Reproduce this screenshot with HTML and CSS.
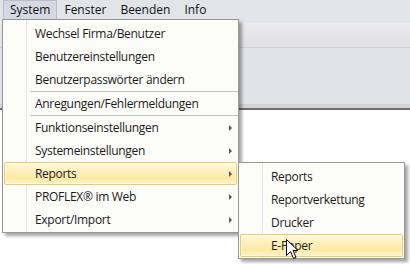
FILE: index.html
```html
<!DOCTYPE html>
<html lang="de">
<head>
    <meta charset="UTF-8">
    <meta name="viewport" content="width=device-width, initial-scale=1.0">
    <title>PROFLEX - System</title>
    <link rel="stylesheet" href="styles.css">
</head>
<body>
    <div class="window">
        <nav class="menubar">
            <span class="menubar-item open">System</span>
            <span class="menubar-item">Fenster</span>
            <span class="menubar-item">Beenden</span>
            <span class="menubar-item">Info</span>
        </nav>
        <div class="strip"></div>
        <div class="toolbar"></div>
        <div class="workspace"></div>
        <div class="divider"></div>
        <div class="content"></div>

        <ul class="menu main-menu">
            <li class="item">Wechsel Firma/Benutzer</li>
            <li class="item">Benutzereinstellungen</li>
            <li class="item">Benutzerpasswörter ändern</li>
            <li class="sep"></li>
            <li class="item">Anregungen/Fehlermeldungen</li>
            <li class="sep"></li>
            <li class="item has-sub">Funktionseinstellungen</li>
            <li class="item has-sub">Systemeinstellungen</li>
            <li class="item has-sub active">Reports</li>
            <li class="item has-sub">PROFLEX® im Web</li>
            <li class="item has-sub">Export/Import</li>
        </ul>

        <ul class="menu sub-menu">
            <li class="item">Reports</li>
            <li class="item">Reportverkettung</li>
            <li class="item">Drucker</li>
            <li class="item active">E-Paper</li>
        </ul>

        <svg class="cursor" width="13" height="21" viewBox="0 0 13 21">
            <path d="M0.5 0.5 L0.5 16.5 L4.5 12.5 L7.5 19.5 L10 18.5 L7 11.5 L12 11.5 Z" fill="#fff" stroke="#000" stroke-width="1" stroke-linejoin="miter"/>
        </svg>
    </div>
</body>
</html>
```

FILE: styles.css
```css
body {
    margin: 0;
    font-family: "Open Sans", "Noto Sans", sans-serif;
    font-size: 12px;
    color: #1b1b1b;
    background-color: #fff;
}

.window {
    position: relative;
    width: 410px;
    height: 264px;
    overflow: hidden;
    background-color: #fff;
}

.menubar {
    display: flex;
    height: 19px;
    padding-left: 3px;
    background-color: #e1e4e8;
}

.menubar-item {
    padding: 0 6px;
    color: #111;
    border: 1px solid transparent;
    border-bottom: none;
    line-height: 18px;
}

.menubar-item.open {
    background-color: #d5d9e1;
    border-color: #b9bec8;
}

.strip {
    height: 4px;
    background-color: #e1e4e8;
}

.toolbar {
    height: 24px;
    background: linear-gradient(#eaeaed, #e1e1e4);
    border-bottom: 1px solid #cdcfd3;
}

.workspace {
    height: 56px;
    background-color: #e0e3e7;
}

.divider {
    height: 4px;
    background-color: #d3d3d3;
    border-bottom: 2px solid #6d6d6d;
}

.content {
    height: 160px;
    background-color: #fff;
}

.menu {
    position: absolute;
    margin: 0;
    list-style: none;
    border: 1px solid #979797;
    background: linear-gradient(to right, transparent 23px, #e2e3e3 23px, #e2e3e3 24px, #fff 24px, #fff 25px, transparent 25px), #fcfcf9;
    box-shadow: 3px 3px 3px rgba(0, 0, 0, 0.35);
}

.main-menu {
    left: 2px;
    top: 19px;
    width: 235px;
    padding: 2px 0 1px;
}

.sub-menu {
    left: 238px;
    top: 162px;
    width: 165px;
    padding: 2px 0 1px;
}

.item {
    position: relative;
    height: 21px;
    line-height: 22px;
    margin: 0 1px;
    padding-left: 30px;
    border: 1px solid transparent;
    border-radius: 2px;
    letter-spacing: -0.3px;
    white-space: nowrap;
}

.item.active {
    border-color: #ebcb66;
    background: linear-gradient(#fef8dc, #fdeeb6 45%, #fce9a6 75%, #fef3c8);
    box-shadow: inset 0 0 0 1px rgba(255, 255, 255, 0.5);
}

.has-sub::after {
    content: "";
    position: absolute;
    right: 4px;
    top: 8px;
    border-left: 3px solid #555;
    border-top: 3px solid transparent;
    border-bottom: 3px solid transparent;
}

.sep {
    height: 1px;
    margin-left: 27px;
    background-color: #c5c5c5;
}

.cursor {
    position: absolute;
    left: 286px;
    top: 239px;
}
```
